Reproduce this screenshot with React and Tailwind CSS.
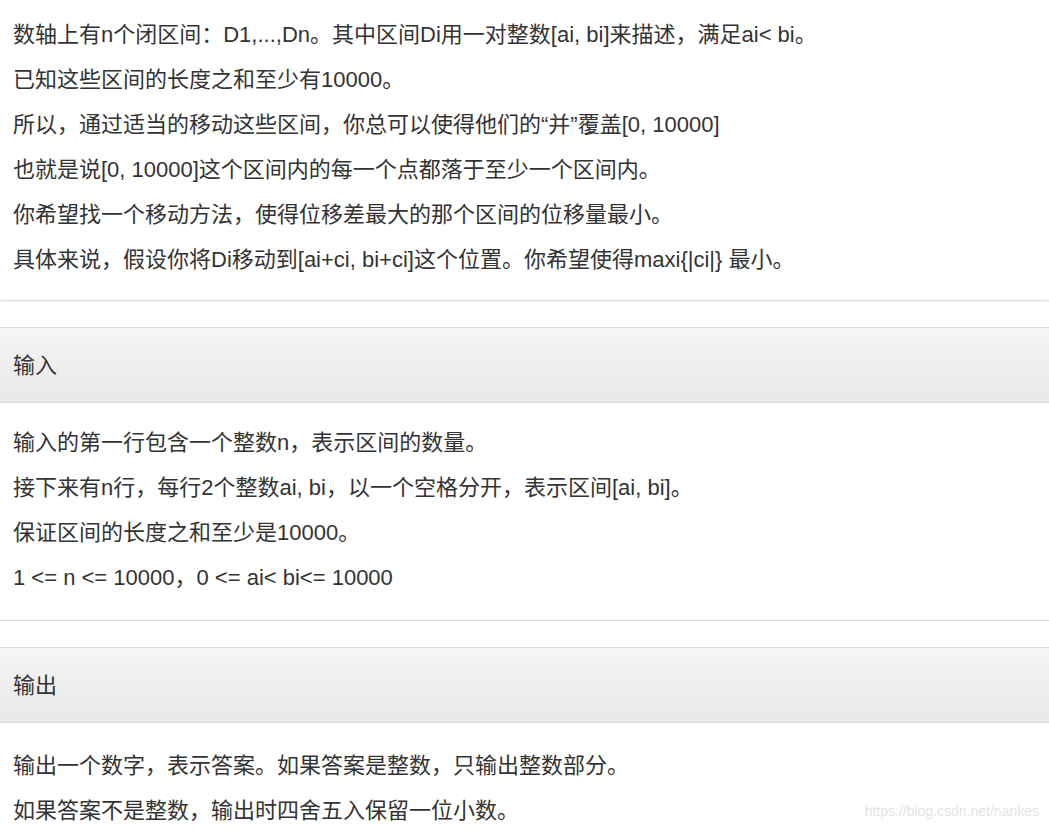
export default function App() {
  const f = { fontFamily: '"Liberation Sans", "Noto Sans CJK SC", sans-serif' };
  const L = ({ children }) => <div className="h-[45px] leading-[45px] whitespace-nowrap">{children}</div>;
  const Header = ({ t }) => (
    <div className="h-[76px] border-y border-[#dcdcdc] bg-gradient-to-b from-[#f5f5f5] to-[#e8e8e8] px-[13px] flex items-center">{t}</div>
  );
  return (
    <div style={f} className="w-[1049px] h-[832px] overflow-hidden bg-white text-[22px] text-[#333] relative">
      <div className="px-[13px] pt-[12px] pb-[18px] border-b border-[#dcdcdc] shadow-[0_1px_2px_rgba(0,0,0,0.05)]">
        <L>数轴上有n个闭区间：D1,...,Dn。其中区间Di用一对整数[ai, bi]来描述，满足ai&lt; bi。</L>
        <L>已知这些区间的长度之和至少有10000。</L>
        <L>所以，通过适当的移动这些区间，你总可以使得他们的“并”覆盖[0, 10000]</L>
        <L>也就是说[0, 10000]这个区间内的每一个点都落于至少一个区间内。</L>
        <L>你希望找一个移动方法，使得位移差最大的那个区间的位移量最小。</L>
        <L>具体来说，假设你将Di移动到[ai+ci, bi+ci]这个位置。你希望使得maxi{'{'}|ci|{'}'} 最小。</L>
      </div>
      <div className="h-[26px]" />
      <Header t="输入" />
      <div className="px-[13px] pt-[17px] pb-[20px] border-b border-[#dcdcdc]">
        <L>输入的第一行包含一个整数n，表示区间的数量。</L>
        <L>接下来有n行，每行2个整数ai, bi，以一个空格分开，表示区间[ai, bi]。</L>
        <L>保证区间的长度之和至少是10000。</L>
        <L>1 &lt;= n &lt;= 10000，0 &lt;= ai&lt; bi&lt;= 10000</L>
      </div>
      <div className="h-[26px]" />
      <Header t="输出" />
      <div className="px-[13px] pt-[20px]">
        <L>输出一个数字，表示答案。如果答案是整数，只输出整数部分。</L>
        <L>如果答案不是整数，输出时四舍五入保留一位小数。</L>
      </div>
      <div className="absolute right-[10px] bottom-[10px] text-[14px] text-[#e4e4e4]">https://blog.csdn.net/nankes</div>
    </div>
  );
}
